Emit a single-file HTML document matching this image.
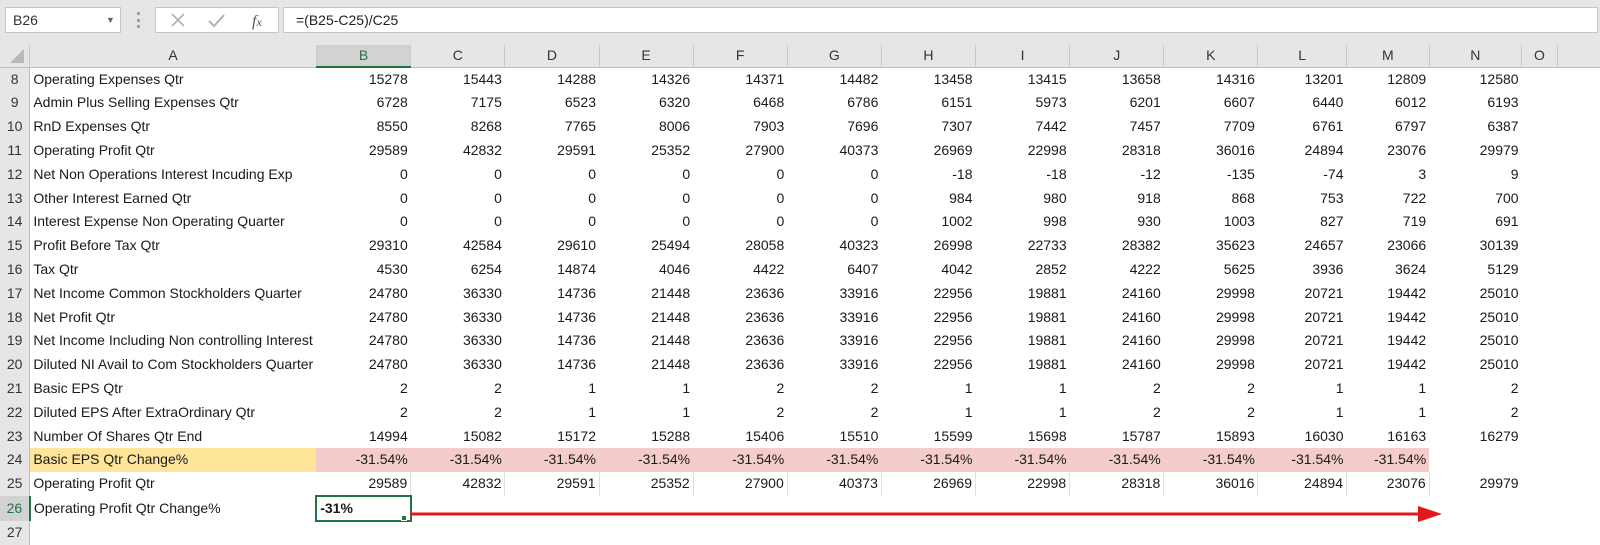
<!DOCTYPE html>
<html><head><meta charset="utf-8">
<style>
*{margin:0;padding:0;box-sizing:border-box}
body{width:1600px;height:527px;overflow:hidden;background:#fff;font-family:"Liberation Sans",Arial,sans-serif;font-size:14px;color:#1a1a1a;position:relative}
#top{position:absolute;left:0;top:0;width:1600px;height:45px;background:#e6e6e6}
.box{position:absolute;top:7px;height:26px;background:#fff;border:1px solid #c6c6c6}
table{position:absolute;left:0;top:45px;border-collapse:collapse;table-layout:fixed}
td{height:23.8px;white-space:nowrap;overflow:hidden;text-align:right;padding:0 3px 0 0;line-height:23px}
tr.h td{height:21px;background:#e6e6e6;text-align:center;padding:0;border-right:1px solid #c8c8c8;border-bottom:1px solid #bdbdbd;line-height:21px;color:#333}
td.rn{background:#e6e6e6;text-align:center;padding:0;color:#333;border-right:1px solid #bdbdbd}
td.a{text-align:left;padding-left:3px}
tr.p td.v{background:#f4cccc}
tr.p td.a{background:#ffe599}
tr.g td.v{border-right:1px solid #e0e0e0}
</style></head><body>
<div id="top">
 <div class="box" style="left:5px;width:116px;padding-left:7px;line-height:24px;color:#333">B26<span style="position:absolute;left:100px;top:0;font-size:9px;color:#666">&#9660;</span></div>
 <div style="position:absolute;left:137px;top:12px;width:3px;height:16px;border-left:3px dotted #a0a0a0"></div>
 <div class="box" style="left:155px;width:124px">
  <svg width="124" height="24" style="position:absolute;left:0;top:0">
   <path d="M16 6 L28 18 M28 6 L16 18" stroke="#b0b0b0" stroke-width="1.6" fill="none"/>
   <path d="M53 13 L58 18 L68 7" stroke="#b0b0b0" stroke-width="2" fill="none"/>
   <text x="96" y="18" font-family="Liberation Serif" font-style="italic" font-size="16" fill="#555">f<tspan font-size="12">x</tspan></text>
  </svg>
 </div>
 <div class="box" style="left:283px;width:1315px;padding-left:12px;line-height:24px;color:#222">=(B25-C25)/C25</div>
</div>
<table>
<colgroup><col style="width:30px"><col style="width:280px"><col style="width:95px"><col style="width:94.6px"><col style="width:94.6px"><col style="width:94.6px"><col style="width:94.6px"><col style="width:94.6px"><col style="width:94.6px"><col style="width:94.6px"><col style="width:94.6px"><col style="width:94.6px"><col style="width:89px"><col style="width:83px"><col style="width:93px"><col style="width:36px"><col style="width:43px"></colgroup>
<tr class="h"><td style="position:relative"><svg width="30" height="21" style="position:absolute;left:0;top:0"><path d="M24 4 L24 18 L10 18 Z" fill="#b8b8b8"/></svg></td><td>A</td><td style="background:#d2d2d2;border-bottom:2px solid #217346;color:#217346">B</td><td>C</td><td>D</td><td>E</td><td>F</td><td>G</td><td>H</td><td>I</td><td>J</td><td>K</td><td>L</td><td>M</td><td>N</td><td>O</td><td style="border-right:none"></td></tr>
<tr><td class="rn">8</td><td class="a">Operating Expenses Qtr</td><td>15278</td><td>15443</td><td>14288</td><td>14326</td><td>14371</td><td>14482</td><td>13458</td><td>13415</td><td>13658</td><td>14316</td><td>13201</td><td>12809</td><td>12580</td><td></td><td></td></tr>
<tr><td class="rn">9</td><td class="a">Admin Plus Selling Expenses Qtr</td><td>6728</td><td>7175</td><td>6523</td><td>6320</td><td>6468</td><td>6786</td><td>6151</td><td>5973</td><td>6201</td><td>6607</td><td>6440</td><td>6012</td><td>6193</td><td></td><td></td></tr>
<tr><td class="rn">10</td><td class="a">RnD Expenses Qtr</td><td>8550</td><td>8268</td><td>7765</td><td>8006</td><td>7903</td><td>7696</td><td>7307</td><td>7442</td><td>7457</td><td>7709</td><td>6761</td><td>6797</td><td>6387</td><td></td><td></td></tr>
<tr><td class="rn">11</td><td class="a">Operating Profit Qtr</td><td>29589</td><td>42832</td><td>29591</td><td>25352</td><td>27900</td><td>40373</td><td>26969</td><td>22998</td><td>28318</td><td>36016</td><td>24894</td><td>23076</td><td>29979</td><td></td><td></td></tr>
<tr><td class="rn">12</td><td class="a">Net Non Operations Interest Incuding Exp</td><td>0</td><td>0</td><td>0</td><td>0</td><td>0</td><td>0</td><td>-18</td><td>-18</td><td>-12</td><td>-135</td><td>-74</td><td>3</td><td>9</td><td></td><td></td></tr>
<tr><td class="rn">13</td><td class="a">Other Interest Earned Qtr</td><td>0</td><td>0</td><td>0</td><td>0</td><td>0</td><td>0</td><td>984</td><td>980</td><td>918</td><td>868</td><td>753</td><td>722</td><td>700</td><td></td><td></td></tr>
<tr><td class="rn">14</td><td class="a">Interest Expense Non Operating Quarter</td><td>0</td><td>0</td><td>0</td><td>0</td><td>0</td><td>0</td><td>1002</td><td>998</td><td>930</td><td>1003</td><td>827</td><td>719</td><td>691</td><td></td><td></td></tr>
<tr><td class="rn">15</td><td class="a">Profit Before Tax Qtr</td><td>29310</td><td>42584</td><td>29610</td><td>25494</td><td>28058</td><td>40323</td><td>26998</td><td>22733</td><td>28382</td><td>35623</td><td>24657</td><td>23066</td><td>30139</td><td></td><td></td></tr>
<tr><td class="rn">16</td><td class="a">Tax Qtr</td><td>4530</td><td>6254</td><td>14874</td><td>4046</td><td>4422</td><td>6407</td><td>4042</td><td>2852</td><td>4222</td><td>5625</td><td>3936</td><td>3624</td><td>5129</td><td></td><td></td></tr>
<tr><td class="rn">17</td><td class="a">Net Income Common Stockholders Quarter</td><td>24780</td><td>36330</td><td>14736</td><td>21448</td><td>23636</td><td>33916</td><td>22956</td><td>19881</td><td>24160</td><td>29998</td><td>20721</td><td>19442</td><td>25010</td><td></td><td></td></tr>
<tr><td class="rn">18</td><td class="a">Net Profit Qtr</td><td>24780</td><td>36330</td><td>14736</td><td>21448</td><td>23636</td><td>33916</td><td>22956</td><td>19881</td><td>24160</td><td>29998</td><td>20721</td><td>19442</td><td>25010</td><td></td><td></td></tr>
<tr><td class="rn">19</td><td class="a">Net Income Including Non controlling Interest</td><td>24780</td><td>36330</td><td>14736</td><td>21448</td><td>23636</td><td>33916</td><td>22956</td><td>19881</td><td>24160</td><td>29998</td><td>20721</td><td>19442</td><td>25010</td><td></td><td></td></tr>
<tr><td class="rn">20</td><td class="a">Diluted NI Avail to Com Stockholders Quarter</td><td>24780</td><td>36330</td><td>14736</td><td>21448</td><td>23636</td><td>33916</td><td>22956</td><td>19881</td><td>24160</td><td>29998</td><td>20721</td><td>19442</td><td>25010</td><td></td><td></td></tr>
<tr><td class="rn">21</td><td class="a">Basic EPS Qtr</td><td>2</td><td>2</td><td>1</td><td>1</td><td>2</td><td>2</td><td>1</td><td>1</td><td>2</td><td>2</td><td>1</td><td>1</td><td>2</td><td></td><td></td></tr>
<tr><td class="rn">22</td><td class="a">Diluted EPS After ExtraOrdinary Qtr</td><td>2</td><td>2</td><td>1</td><td>1</td><td>2</td><td>2</td><td>1</td><td>1</td><td>2</td><td>2</td><td>1</td><td>1</td><td>2</td><td></td><td></td></tr>
<tr><td class="rn">23</td><td class="a">Number Of Shares Qtr End</td><td>14994</td><td>15082</td><td>15172</td><td>15288</td><td>15406</td><td>15510</td><td>15599</td><td>15698</td><td>15787</td><td>15893</td><td>16030</td><td>16163</td><td>16279</td><td></td><td></td></tr>
<tr class="p"><td class="rn">24</td><td class="a">Basic EPS Qtr Change%</td><td class="v">-31.54%</td><td class="v">-31.54%</td><td class="v">-31.54%</td><td class="v">-31.54%</td><td class="v">-31.54%</td><td class="v">-31.54%</td><td class="v">-31.54%</td><td class="v">-31.54%</td><td class="v">-31.54%</td><td class="v">-31.54%</td><td class="v">-31.54%</td><td class="v">-31.54%</td><td></td><td></td><td></td></tr>
<tr class="g"><td class="rn">25</td><td class="a">Operating Profit Qtr</td><td class="v">29589</td><td class="v">42832</td><td class="v">29591</td><td class="v">25352</td><td class="v">27900</td><td class="v">40373</td><td class="v">26969</td><td class="v">22998</td><td class="v">28318</td><td class="v">36016</td><td class="v">24894</td><td class="v">23076</td><td>29979</td><td></td><td></td></tr>
<tr><td class="rn" style="background:#d2d2d2;border-right:2px solid #217346;color:#217346">26</td><td class="a">Operating Profit Qtr Change%</td><td style="text-align:left;padding-left:3px;font-weight:bold;border:2px solid #217346">-31%</td><td></td><td></td><td></td><td></td><td></td><td></td><td></td><td></td><td></td><td></td><td></td><td></td><td></td><td></td></tr>
<tr><td class="rn">27</td><td></td><td></td><td></td><td></td><td></td><td></td><td></td><td></td><td></td><td></td><td></td><td></td><td></td><td></td><td></td><td></td></tr>
</table>
<div style="position:absolute;left:401px;top:515px;width:6px;height:6px;background:#217346;border:1px solid #fff"></div>
<svg width="1600" height="527" style="position:absolute;left:0;top:0">
<line x1="410" y1="514" x2="1422" y2="514" stroke="#e01818" stroke-width="3"/>
<path d="M1418 506 L1442 514 L1418 522 Z" fill="#e01818"/>
</svg>
</body></html>
